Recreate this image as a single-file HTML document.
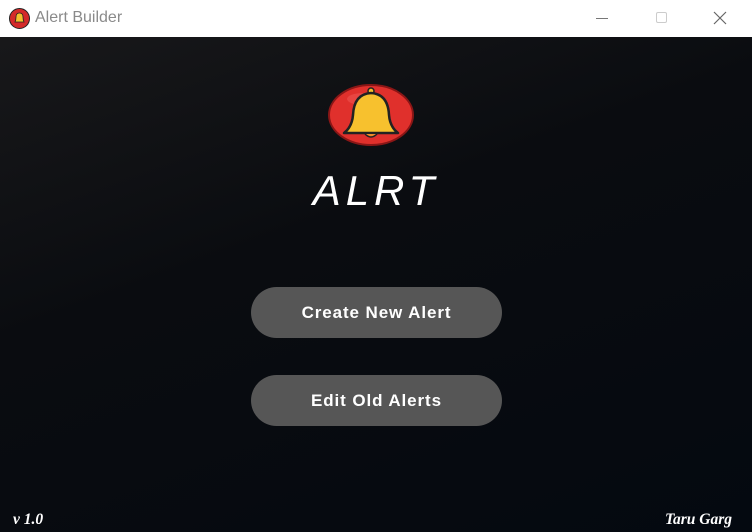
<!DOCTYPE html>
<html><head><meta charset="utf-8"><style>
*{margin:0;padding:0;box-sizing:border-box}
html,body{width:752px;height:532px;overflow:hidden;background:#fff;font-family:"Liberation Sans",sans-serif}
.tb{position:absolute;left:0;top:0;width:752px;height:37px;background:#fff;border-radius:8px 8px 0 0}
.tb .t{position:absolute;left:35px;top:9px;font-size:16px;color:#8a8a8a}
.main{position:absolute;left:0;top:37px;width:752px;height:495px;background:linear-gradient(160deg,#18181a 0%,#0a0c10 40%,#040910 100%)}
.btn{position:absolute;left:251px;width:251px;height:51px;border-radius:26px;background:#565656;color:#fff;font-weight:bold;font-size:17px;letter-spacing:0.9px;text-align:center;line-height:51px}
.alrt{position:absolute;left:0;width:752px;top:130px;text-align:center;color:#fff;font-size:42px;font-style:italic;letter-spacing:5px;font-family:"Liberation Sans",sans-serif;font-weight:normal}
.ft{position:absolute;bottom:3px;color:#fff;font-family:"Liberation Serif",serif;font-style:italic;font-weight:bold;font-size:15.5px}
</style></head><body>
<div class="tb">
<svg style="position:absolute;left:9px;top:8px" width="21" height="21" viewBox="0 0 21 21"><circle cx="10.5" cy="10.5" r="10" fill="#d42a2a" stroke="#222"/><path d="M6 14 Q7 12 7 9 Q7 5 10.5 5 Q14 5 14 9 Q14 12 15 14Z" fill="#f5c02c" stroke="#222" stroke-width=".8"/></svg>
<div class="t">Alert Builder</div>
<div style="position:absolute;left:596px;top:18px;width:12px;height:1px;background:#777"></div>
<div style="position:absolute;left:656px;top:12px;width:11px;height:11px;border:1px solid #ccc;border-radius:2px"></div>
<svg style="position:absolute;left:713px;top:11px" width="14" height="14"><path d="M1 1L13 13M13 1L1 13" stroke="#666" stroke-width="1.2"/></svg>
</div>
<div class="main">
<svg style="position:absolute;left:327px;top:46px" width="88" height="64" viewBox="0 0 88 64">
<ellipse cx="44" cy="32" rx="42" ry="30" fill="#e0302c" stroke="#8a1616" stroke-width="2"/>
<ellipse cx="36" cy="16" rx="16" ry="6" fill="#ef5a55" opacity=".5"/>
<circle cx="44" cy="8" r="3" fill="#f5c02c" stroke="#222" stroke-width="1.5"/>
<path d="M17 50 Q25 44 26 32 Q27 11 44 10 Q61 11 62 32 Q63 44 71 50Z" fill="#f7c12e" stroke="#222" stroke-width="2.5" stroke-linejoin="round"/>
<path d="M38 51 Q44 57 50 51" fill="#f08a2a" stroke="#222" stroke-width="1.5"/>
</svg>
<div class="alrt">ALRT</div>
<div class="btn" style="top:250px">Create New Alert</div>
<div class="btn" style="top:338px">Edit Old Alerts</div>
<div class="ft" style="left:13px">v 1.0</div>
<div class="ft" style="right:20px">Taru Garg</div>
</div>
</body></html>
